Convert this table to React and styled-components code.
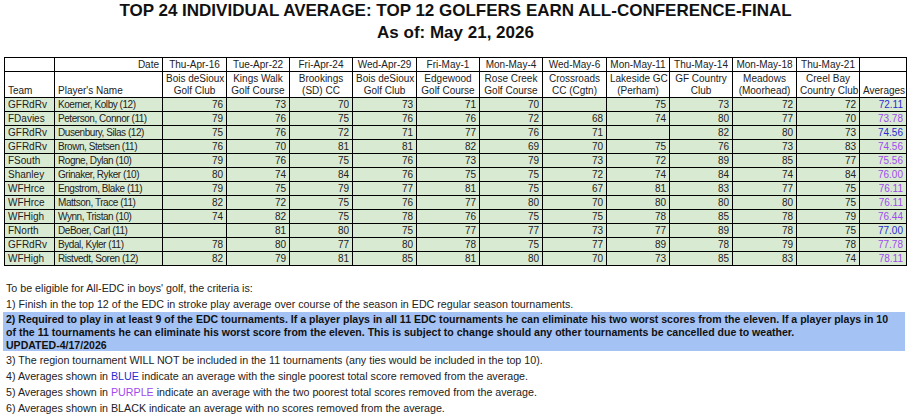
import React from 'react';
import styled, {createGlobalStyle} from 'styled-components';

const GlobalStyle = createGlobalStyle`
  body {
    margin: 0;
    background: #fff;
    font-family: "Liberation Sans", Arial, sans-serif;
    color: #222;
  }
`;

const Page = styled.div`
  width: 911px;
  height: 419px;
  overflow: hidden;
`;

const Title = styled.div`
  text-align: center;
  font-weight: bold;
  font-size: 17px;
  line-height: 22px;
  color: #111;
  height: 44px;
  margin-bottom: 13px;
`;

const Table = styled.table`
  margin-left: 4px;
  width: 902px;
  border-collapse: collapse;
  table-layout: fixed;
  font-size: 10px;
`;

const HeadRow = styled.tr`
  height: ${p => p.$tall ? '26px' : '14px'};
`;

const HeadCell = styled.th`
  border: 1px solid #000;
  font-weight: normal;
  padding: 0 3px;
  line-height: 12px;
  text-align: ${p => p.$align || 'center'};
  vertical-align: bottom;
  white-space: nowrap;
  overflow: hidden;
`;

const Row = styled.tr`
  height: 14px;
  background: #d9ead3;
`;

const Cell = styled.td`
  border: 1px solid #000;
  padding: 0 3px;
  line-height: 12px;
  text-align: ${p => p.$align || 'right'};
  white-space: nowrap;
  overflow: hidden;
`;

const NameCell = styled(Cell)`
  letter-spacing: -0.45px;
`;

const AvgCell = styled(Cell)`
  color: ${p => p.$tone === 'blue' ? '#2a2ad6' : '#a04aee'};
`;

const Notes = styled.div`
  margin-top: 15px;
  font-size: 10.7px;
  line-height: 15.7px;
`;

const Line = styled.div`
  padding-left: 6px;
  white-space: nowrap;
`;

const Highlight = styled.div`
  margin: 0 6px 2px 3px;
  padding: 1px 0 0 3px;
  height: 38px;
  background: #a4c2f4;
  font-weight: bold;
  font-size: 10.55px;
  color: #111;
  line-height: 12.8px;
  white-space: nowrap;
`;

const Tone = styled.span`
  color: ${p => p.$tone === 'blue' ? '#2a2ad6' : '#a04aee'};
`;

const widths = [50, 108, 64, 63, 63, 64, 63, 63, 64, 63, 63, 64, 63, 47];

const events = [
  ['Thu-Apr-16', 'Bois deSioux', 'Golf Club'],
  ['Tue-Apr-22', 'Kings Walk', 'Golf Course'],
  ['Fri-Apr-24', 'Brookings', '(SD) CC'],
  ['Wed-Apr-29', 'Bois deSioux', 'Golf Club'],
  ['Fri-May-1', 'Edgewood', 'Golf Course'],
  ['Mon-May-4', 'Rose Creek', 'Golf Course'],
  ['Wed-May-6', 'Crossroads', 'CC (Cgtn)'],
  ['Mon-May-11', 'Lakeside GC', '(Perham)'],
  ['Thu-May-14', 'GF Country', 'Club'],
  ['Mon-May-18', 'Meadows', '(Moorhead)'],
  ['Thu-May-21', 'Creel Bay', 'Country Club'],
];

// blank score = didn't play that event
const players = [
  ['GFRdRv', 'Koerner, Kolby (12)', [76, 73, 70, 73, 71, 70, '', 75, 73, 72, 72], '72.11', 'blue'],
  ['FDavies', 'Peterson, Connor (11)', [79, 76, 75, 76, 76, 72, 68, 74, 80, 77, 70], '73.78', 'purple'],
  ['GFRdRv', 'Dusenbury, Silas (12)', [75, 76, 72, 71, 77, 76, 71, '', 82, 80, 73], '74.56', 'blue'],
  ['GFRdRv', 'Brown, Stetsen (11)', [76, 70, 81, 81, 82, 69, 70, 75, 76, 73, 83], '74.56', 'purple'],
  ['FSouth', 'Rogne, Dylan (10)', [79, 76, 75, 76, 73, 79, 73, 72, 89, 85, 77], '75.56', 'purple'],
  ['Shanley', 'Grinaker, Ryker (10)', [80, 74, 84, 76, 75, 75, 72, 74, 84, 74, 84], '76.00', 'purple'],
  ['WFHrce', 'Engstrom, Blake (11)', [79, 75, 79, 77, 81, 75, 67, 81, 83, 77, 75], '76.11', 'purple'],
  ['WFHrce', 'Mattson, Trace (11)', [82, 72, 75, 76, 77, 80, 70, 80, 80, 80, 75], '76.11', 'purple'],
  ['WFHigh', 'Wynn, Tristan (10)', [74, 82, 75, 78, 76, 75, 75, 78, 85, 78, 79], '76.44', 'purple'],
  ['FNorth', 'DeBoer, Carl (11)', ['', 81, 80, 75, 77, 77, 73, 77, 89, 78, 75], '77.00', 'blue'],
  ['GFRdRv', 'Bydal, Kyler (11)', [78, 80, 77, 80, 78, 75, 77, 89, 78, 79, 78], '77.78', 'purple'],
  ['WFHigh', 'Ristvedt, Soren (12)', [82, 79, 81, 85, 81, 80, 70, 73, 85, 83, 74], '78.11', 'purple'],
];

export default function App() {
  return (
    <Page>
      <GlobalStyle />
      <Title>
        <div>TOP 24 INDIVIDUAL AVERAGE: TOP 12 GOLFERS EARN ALL-CONFERENCE-FINAL</div>
        <div>As of: May 21, 2026</div>
      </Title>

      <Table>
        <colgroup>
          {widths.map((w, i) => <col key={i} style={{width: w}} />)}
        </colgroup>
        <thead>
          <HeadRow>
            <HeadCell />
            <HeadCell $align="right">Date</HeadCell>
            {events.map(e => <HeadCell key={e[0]}>{e[0]}</HeadCell>)}
            <HeadCell />
          </HeadRow>
          <HeadRow $tall>
            <HeadCell $align="left">Team</HeadCell>
            <HeadCell $align="left">Player's Name</HeadCell>
            {events.map(e => <HeadCell key={e[0]}>{e[1]}<br />{e[2]}</HeadCell>)}
            <HeadCell>Averages</HeadCell>
          </HeadRow>
        </thead>
        <tbody>
          {players.map((p, i) => (
            <Row key={i}>
              <Cell $align="left">{p[0]}</Cell>
              <NameCell $align="left">{p[1]}</NameCell>
              {p[2].map((s, j) => <Cell key={j}>{s}</Cell>)}
              <AvgCell $tone={p[4]}>{p[3]}</AvgCell>
            </Row>
          ))}
        </tbody>
      </Table>

      <Notes>
        <Line>To be eligible for All-EDC in boys' golf, the criteria is:</Line>
        <Line>1) Finish in the top 12 of the EDC in stroke play average over course of the season in EDC regular season tournaments.</Line>
        <Highlight>
          2) Required to play in at least 9 of the EDC tournaments. If a player plays in all 11 EDC tournaments he can eliminate his two worst scores from the eleven. If a player plays in 10<br />
          of the 11 tournaments he can eliminate his worst score from the eleven. This is subject to change should any other tournaments be cancelled due to weather.<br />
          UPDATED-4/17/2026
        </Highlight>
        <Line>3) The region tournament WILL NOT be included in the 11 tournaments (any ties would be included in the top 10).</Line>
        <Line>4) Averages shown in <Tone $tone="blue">BLUE</Tone> indicate an average with the single poorest total score removed from the average.</Line>
        <Line>5) Averages shown in <Tone $tone="purple">PURPLE</Tone> indicate an average with the two poorest total scores removed from the average.</Line>
        <Line>6) Averages shown in BLACK indicate an average with no scores removed from the average.</Line>
      </Notes>
    </Page>
  );
}
